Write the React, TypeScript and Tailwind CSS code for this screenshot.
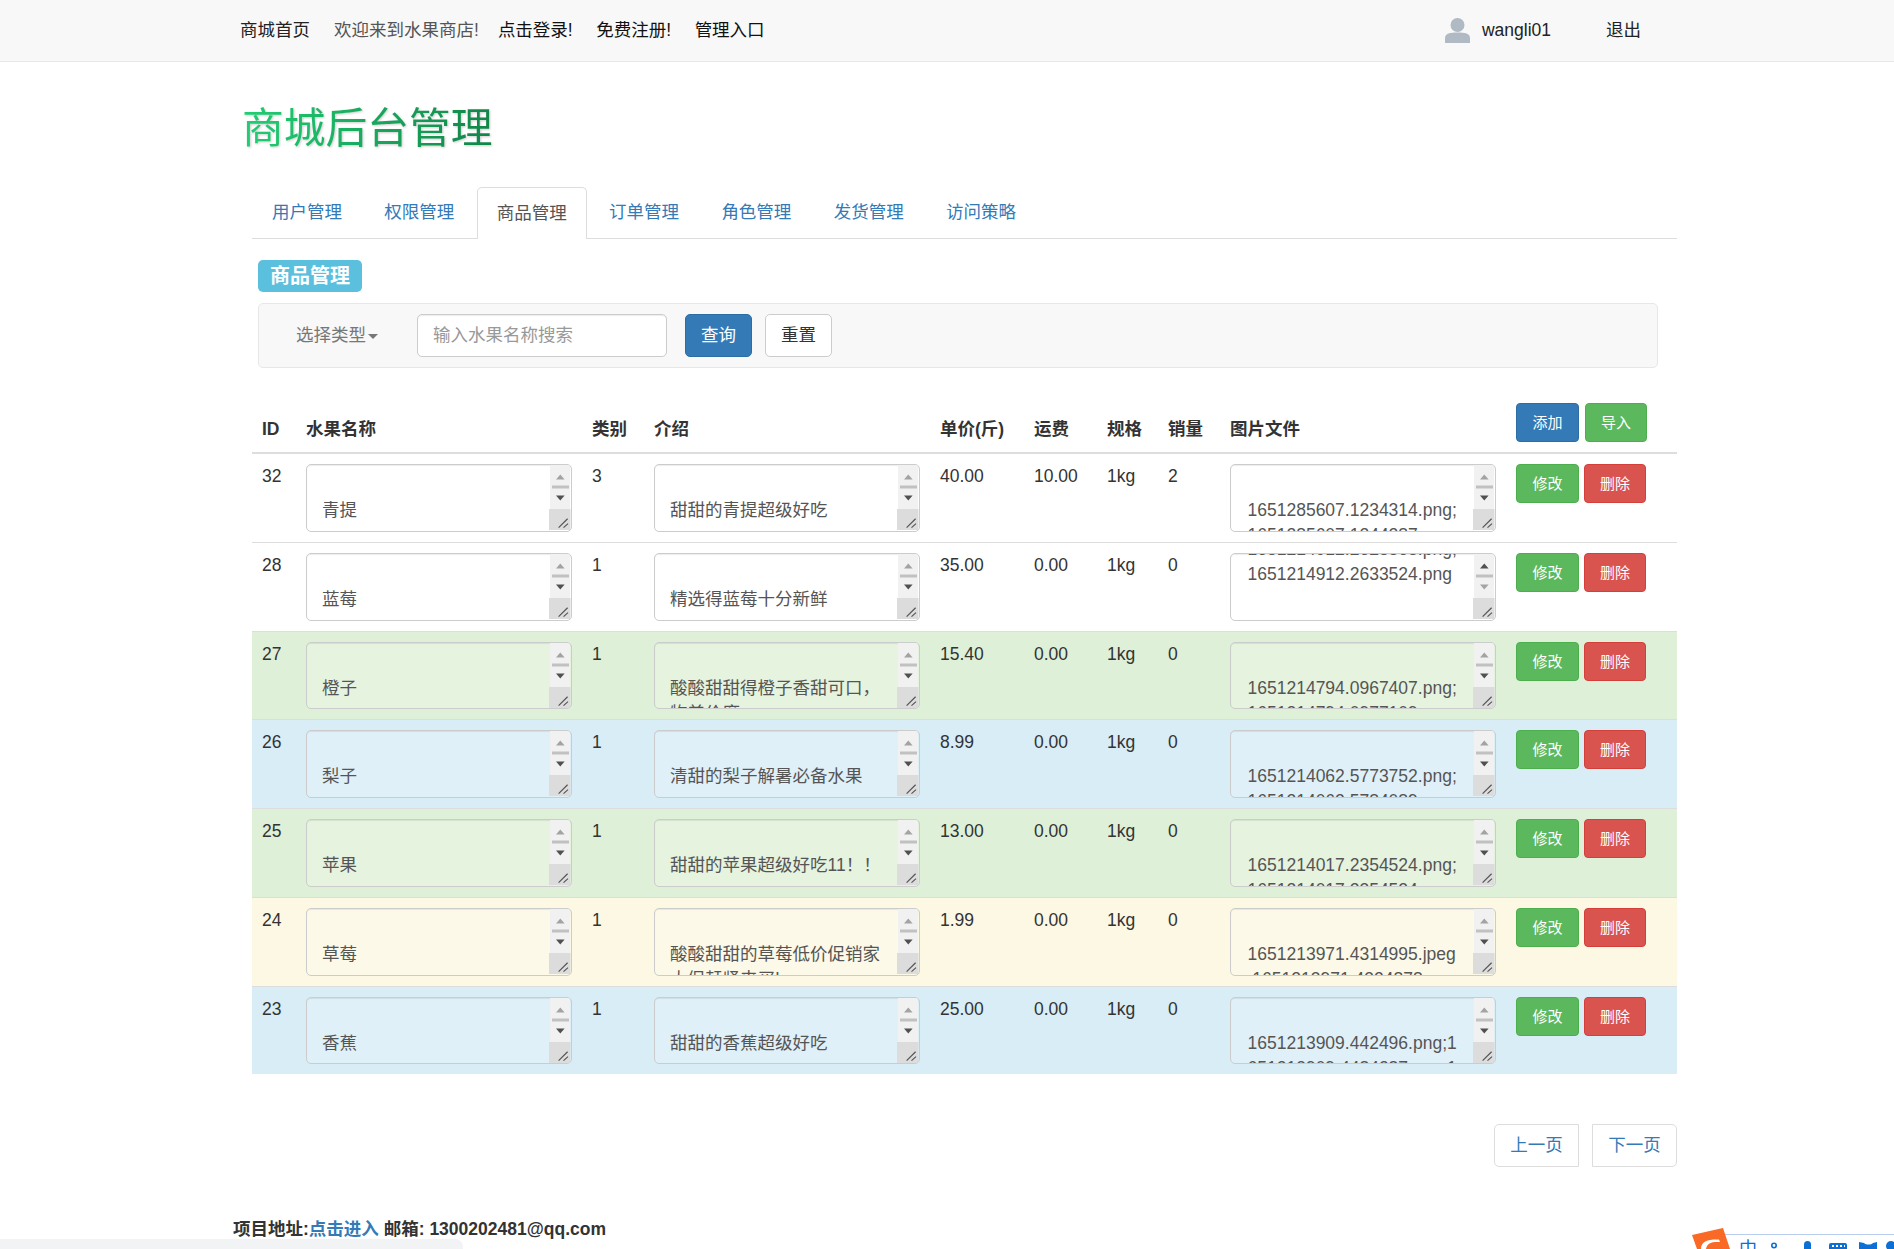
const tabs = ['用户管理', '权限管理', '商品管理', '订单管理', '角色管理', '发货管理', '访问策略'];

type Row = {
  id: number;
  name: string;
  cat: number;
  intro: string[];
  price: string;
  ship: string;
  sold: number;
  files: string[];
  scrolled?: boolean;
  bg: string;
};

const rows: Row[] = [
  { id: 32, name: '青提', cat: 3, intro: ['甜甜的青提超级好吃'], price: '40.00', ship: '10.00', sold: 2, files: ['1651285607.1234314.png;', '1651285607.1244287.png'], bg: 'bg-white' },
  { id: 28, name: '蓝莓', cat: 1, intro: ['精选得蓝莓十分新鲜'], price: '35.00', ship: '0.00', sold: 0, files: ['1651214912.2625565.png;', '1651214912.2633524.png'], scrolled: true, bg: 'bg-white' },
  { id: 27, name: '橙子', cat: 1, intro: ['酸酸甜甜得橙子香甜可口，', '物美价廉'], price: '15.40', ship: '0.00', sold: 0, files: ['1651214794.0967407.png;', '1651214794.0977109.png'], bg: 'bg-[#dff0d8]' },
  { id: 26, name: '梨子', cat: 1, intro: ['清甜的梨子解暑必备水果'], price: '8.99', ship: '0.00', sold: 0, files: ['1651214062.5773752.png;', '1651214062.5784089.png'], bg: 'bg-[#d9edf7]' },
  { id: 25, name: '苹果', cat: 1, intro: ['甜甜的苹果超级好吃11！！'], price: '13.00', ship: '0.00', sold: 0, files: ['1651214017.2354524.png;', '1651214017.2354524.png'], bg: 'bg-[#dff0d8]' },
  { id: 24, name: '草莓', cat: 1, intro: ['酸酸甜甜的草莓低价促销家', '大促赶紧来买!'], price: '1.99', ship: '0.00', sold: 0, files: ['1651213971.4314995.jpeg', ';1651213971.4324878.png'], bg: 'bg-[#fcf8e3]' },
  { id: 23, name: '香蕉', cat: 1, intro: ['甜甜的香蕉超级好吃'], price: '25.00', ship: '0.00', sold: 0, files: ['1651213909.442496.png;1', '651213909.4484287.png;1'], bg: 'bg-[#d9edf7]' },
];

const TextBox = ({ lines, scrolled, file }: { lines: string[]; scrolled?: boolean; file?: boolean }) => (
  <div className="relative h-[67.75px] w-[266px] overflow-hidden rounded-[5px] border border-[#ccc] bg-white/20 shadow-[inset_0_1px_1px_rgba(0,0,0,0.075)]">
    <div
      className={`whitespace-nowrap leading-[25px] text-[#555] ${file ? 'pl-[16.5px]' : 'pl-[15px]'} ${
        scrolled ? '-mt-[17px]' : 'pt-[33px]'
      }`}
    >
      {lines.map((l) => (
        <div key={l} className="h-[25px]">
          {l}
        </div>
      ))}
    </div>
    <svg className="absolute right-0 top-[-1px]" width="22" height="68" viewBox="0 0 22 68">
      <rect x="1" y="1" width="20" height="44" fill="#f1f1f1" />
      <path d="M7 15.5 L11.3 10.5 L15.6 15.5 Z" fill={scrolled ? '#505050' : '#a3a3a3'} />
      <rect x="3" y="21.5" width="17" height="3" fill="#c1c1c1" />
      <path d="M7 31.5 L15.6 31.5 L11.3 36.5 Z" fill={scrolled ? '#a3a3a3' : '#505050'} />
      <rect x="0" y="45" width="21.5" height="21" fill="#dcdcdc" />
      <path d="M9.6 63.6 L18.6 54.7 M14.5 63.6 L19 59.6" stroke="#555" strokeWidth="1.2" fill="none" />
    </svg>
  </div>
);

const SmallBtn = ({ color, label, cls }: { color: string; label: string; cls: string }) => (
  <button className={`h-[39px] rounded-[4px] border text-[15px] text-white ${color} ${cls}`}>{label}</button>
);

export default function App() {
  return (
    <div
      className="relative h-[1249px] w-[1894px] overflow-hidden bg-white text-[17.5px] leading-[25px] text-[#333]"
      style={{ fontFamily: '"Liberation Sans", "Noto Sans CJK SC", sans-serif' }}
    >
      {/* top nav */}
      <nav className="flex h-[62px] items-center border-b border-[#e7e7e7] bg-[#f8f8f8] pl-[240px] pr-[253px] text-[17.5px]">
        <a className="text-[#222]">商城首页</a>
        <span className="ml-[24px] text-[#555]">欢迎来到水果商店!</span>
        <a className="ml-[19px] text-[#111]">点击登录!</a>
        <a className="ml-[23.5px] text-[#111]">免费注册!</a>
        <a className="ml-[23.5px] text-[#111]">管理入口</a>
        <svg className="ml-auto" width="25" height="25" viewBox="0 0 25 25">
          <circle cx="12.5" cy="7" r="7" fill="#b0bac5" />
          <path d="M0 25 V20 C0 15.5 5 14.5 12.5 14.5 C20 14.5 25 15.5 25 20 V25 Z" fill="#b0bac5" />
        </svg>
        <span className="ml-[12px] text-[#222]">wangli01</span>
        <a className="ml-[55px] text-[#222]">退出</a>
      </nav>

      <div className="pl-[242px] pt-[38px]">
        <h1 className="w-fit bg-gradient-to-r from-[#20cf74] to-[#128549] bg-clip-text text-[41.75px] font-normal leading-[58px] text-transparent drop-shadow-[1px_1px_1px_rgba(0,0,0,0.2)]">
          商城后台管理
        </h1>
      </div>

      <main className="ml-[252px] mt-[29px] w-[1425px]">
        <ul className="flex h-[52px] gap-[2.35px] border-b border-[#ddd]">
          {tabs.map((t) => (
            <li
              key={t}
              className={
                t === '商品管理'
                  ? 'z-10 -mb-px flex h-[52px] w-[110px] items-center justify-center rounded-t-[5px] border border-b-0 border-[#ddd] bg-white text-[#555]'
                  : 'flex h-[51px] w-[110px] items-center justify-center text-[#337ab7]'
              }
            >
              {t}
            </li>
          ))}
        </ul>

        <div className="ml-[6px] mt-[21px] flex h-[32px] w-[104px] items-center justify-center rounded-[5px] bg-[#5bc0de] text-[20px] font-bold text-white">
          商品管理
        </div>

        <div className="ml-[6px] mt-[11px] flex h-[65px] w-[1400px] items-center rounded-[5px] border border-[#e7e7e7] bg-[#f8f8f8] pb-px pl-[37px]">
          <span className="text-[#777]">选择类型</span>
          <span className="ml-[2px] mt-[2px] h-0 w-0 border-x-[5px] border-t-[5px] border-x-transparent border-t-[#777]" />
          <input
            className="ml-[39px] h-[43px] w-[250px] rounded-[5px] border border-[#ccc] bg-white pl-[15px] shadow-[inset_0_1px_1px_rgba(0,0,0,0.075)] placeholder:text-[#999]"
            placeholder="输入水果名称搜索"
          />
          <button className="ml-[18px] h-[43px] w-[67px] rounded-[5px] border border-[#2e6da4] bg-[#337ab7] text-white">查询</button>
          <button className="ml-[13px] h-[43px] w-[67px] rounded-[5px] border border-[#ccc] bg-white text-[#333]">重置</button>
        </div>

        <table className="mt-[25px] w-[1425px] table-fixed border-collapse">
          <colgroup>
            <col className="w-[44px]" />
            <col className="w-[286px]" />
            <col className="w-[62px]" />
            <col className="w-[286px]" />
            <col className="w-[94px]" />
            <col className="w-[73px]" />
            <col className="w-[61px]" />
            <col className="w-[62px]" />
            <col className="w-[286px]" />
            <col className="w-[171px]" />
          </colgroup>
          <thead>
            <tr className="border-b-2 border-[#ddd] text-left align-bottom font-bold">
              <th className="p-[10px]">ID</th>
              <th className="p-[10px]">水果名称</th>
              <th className="p-[10px]">类别</th>
              <th className="p-[10px]">介绍</th>
              <th className="p-[10px]">单价(斤)</th>
              <th className="p-[10px]">运费</th>
              <th className="p-[10px]">规格</th>
              <th className="p-[10px]">销量</th>
              <th className="p-[10px]">图片文件</th>
              <th className="p-[10px] font-normal">
                <div className="flex gap-[6px]">
                  <SmallBtn color="border-[#2e6da4] bg-[#337ab7]" label="添加" cls="w-[63px]" />
                  <SmallBtn color="border-[#4cae4c] bg-[#5cb85c]" label="导入" cls="w-[62px]" />
                </div>
              </th>
            </tr>
          </thead>
          <tbody>
            {rows.map((r) => (
              <tr key={r.id} className={`border-t border-[#ddd] align-top ${r.bg}`}>
                <td className="p-[10px]">{r.id}</td>
                <td className="p-[10px]">
                  <TextBox lines={[r.name]} />
                </td>
                <td className="p-[10px]">{r.cat}</td>
                <td className="p-[10px]">
                  <TextBox lines={r.intro} />
                </td>
                <td className="p-[10px]">{r.price}</td>
                <td className="p-[10px]">{r.ship}</td>
                <td className="p-[10px]">1kg</td>
                <td className="p-[10px]">{r.sold}</td>
                <td className="p-[10px]">
                  <TextBox lines={r.files} scrolled={r.scrolled} file />
                </td>
                <td className="p-[10px]">
                  <div className="flex gap-[5px]">
                    <SmallBtn color="border-[#4cae4c] bg-[#5cb85c]" label="修改" cls="w-[63px]" />
                    <SmallBtn color="border-[#d43f3a] bg-[#d9534f]" label="删除" cls="w-[62px]" />
                  </div>
                </td>
              </tr>
            ))}
          </tbody>
        </table>

        <div className="mt-[50px] flex justify-end gap-[13px] text-[#337ab7]">
          <a className="flex h-[43px] w-[85px] items-center justify-center rounded-l-[5px] border border-[#ddd]">上一页</a>
          <a className="flex h-[43px] w-[85px] items-center justify-center rounded-r-[5px] border border-[#ddd]">下一页</a>
        </div>
      </main>

      <footer className="ml-[233px] mt-[50px] font-bold">
        项目地址:<a className="text-[#337ab7]">点击进入</a> 邮箱: 1300202481@qq.com
      </footer>

      {/* browser status bubble at the bottom edge */}
      <div className="absolute bottom-0 left-0 h-[10px] w-[463px] rounded-tr-[8px] bg-[#f1f3f4]" />

      {/* IME toolbar, cut off by the window */}
      <div className="absolute bottom-0 right-0 h-[21px] w-[202px] overflow-hidden bg-white">
        <div className="absolute left-[33px] right-0 top-[6px] h-px bg-[#b9cdf0]" />
        <svg className="absolute left-0 top-0" width="202" height="21" viewBox="0 0 202 21">
          <path d="M0 7 L31 0 L38 21 L5 21 Z" fill="#f96a26" />
          <path d="M9 21 C9 13 17 11 27 11.5 L28 14 C20 13.5 15 15 14 21 Z" fill="#fff" />
          <circle cx="82" cy="17.5" r="2.2" fill="none" stroke="#0b6fd6" strokeWidth="1.6" />
          <rect x="112" y="13" width="7" height="12" rx="3.5" fill="#0b6fd6" />
          <rect x="137" y="15" width="18" height="10" rx="2" fill="#0b6fd6" />
          <path d="M140 18 H142 M144 18 H146 M148 18 H150 M152 18 H153" stroke="#fff" strokeWidth="2" />
          <path d="M167 14 L172 15 C174 17 179 17 181 15 L185 14 V21 H167 Z" fill="#0b6fd6" />
          <circle cx="199" cy="18" r="5" fill="#0b6fd6" />
        </svg>
        <span className="absolute left-[47px] top-[10px] text-[18px] leading-[22px] text-[#0b6fd6]">中</span>
      </div>
    </div>
  );
}
